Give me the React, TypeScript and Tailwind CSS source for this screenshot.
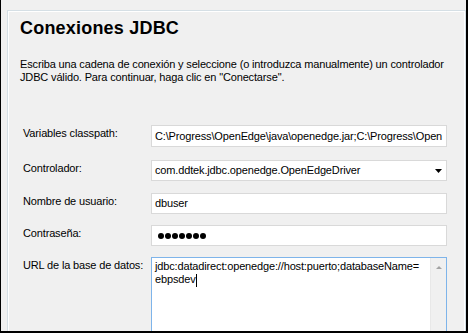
const labelCls = "w-[128px] shrink-0 pt-[2px] leading-[13px]";
const boxCls =
  "w-[296px] bg-white border border-[#d9d9d9] flex items-center pl-[3px] overflow-hidden whitespace-nowrap leading-[13px]";

function Row({ label, className, children }: { label: string; className?: string; children: React.ReactNode }) {
  return (
    <div className={`flex items-start ${className ?? ""}`}>
      <div className={labelCls}>{label}</div>
      {children}
    </div>
  );
}

export default function App() {
  return (
    <div className="w-[468px] h-[333px] bg-[#f0f0f0] border-l border-r-2 border-b-2 border-black flex flex-col pl-[6px] pt-[10px] overflow-hidden font-['Liberation_Sans',Arial,sans-serif] text-black">
      {/* Panel */}
      <div className="flex-1 flex flex-col border-t border-l border-r border-[#d5dfe5] overflow-hidden">
        <div className="flex-1 flex flex-col border-t border-l border-r border-white pl-[11px] pt-[6px]">
          <h1 className="text-[18px] font-bold leading-[20px] tracking-[0.2px]">Conexiones JDBC</h1>

          <p className="mt-[20px] text-[11px] leading-[13px] tracking-[-0.15px]">
            Escriba una cadena de conexión y seleccione (o introduzca manualmente) un controlador
            <br />
            JDBC válido. Para continuar, haga clic en "Conectarse".
          </p>

          {/* Form */}
          <div className="mt-[41px] ml-[3px] flex flex-col text-[11px] tracking-[-0.15px]">
            <Row label="Variables classpath:">
              <div className={`${boxCls} h-[22px]`}>
                C:\Progress\OpenEdge\java\openedge.jar;C:\Progress\Open
              </div>
            </Row>

            <Row label="Controlador:" className="mt-[13px]">
              <div className={`${boxCls} h-[21px] justify-between pr-[4px]`}>
                <span>com.ddtek.jdbc.openedge.OpenEdgeDriver</span>
                <svg width="7" height="4" viewBox="0 0 7 4" className="mt-[1px]">
                  <polygon points="0,0 7,0 3.5,4" fill="#000" />
                </svg>
              </div>
            </Row>

            <Row label="Nombre de usuario:" className="mt-[12px]">
              <div className={`${boxCls} h-[21px]`}>dbuser</div>
            </Row>

            <Row label="Contraseña:" className="mt-[11px]">
              <div className={`${boxCls} h-[21px] gap-[1px] pl-[6px]`}>
                {Array.from({ length: 7 }).map((_, i) => (
                  <span key={i} className="w-[6px] h-[6px] rounded-full bg-black" />
                ))}
              </div>
            </Row>

            <Row label="URL de la base de datos:" className="mt-[11px]">
              <div className="w-[296px] h-[100px] bg-white border border-[#7eb4ea] flex leading-[13px]">
                <div className="flex-1 pl-[3px] pt-[2px]">
                  <div>jdbc:datadirect:openedge://host:puerto;databaseName=</div>
                  <div className="flex items-start">
                    <span>ebpsdev</span>
                    <span className="w-px h-[13px] bg-black mt-[1px]" />
                  </div>
                </div>
                <div className="w-[16px] bg-[#f0f0f0] border-l border-[#e8e8e8] flex justify-center pt-[8px]">
                  <svg width="6" height="3" viewBox="0 0 6 3">
                    <polygon points="0,3 6,3 3,0" fill="#a3a3a3" />
                  </svg>
                </div>
              </div>
            </Row>
          </div>
        </div>
      </div>
    </div>
  );
}
